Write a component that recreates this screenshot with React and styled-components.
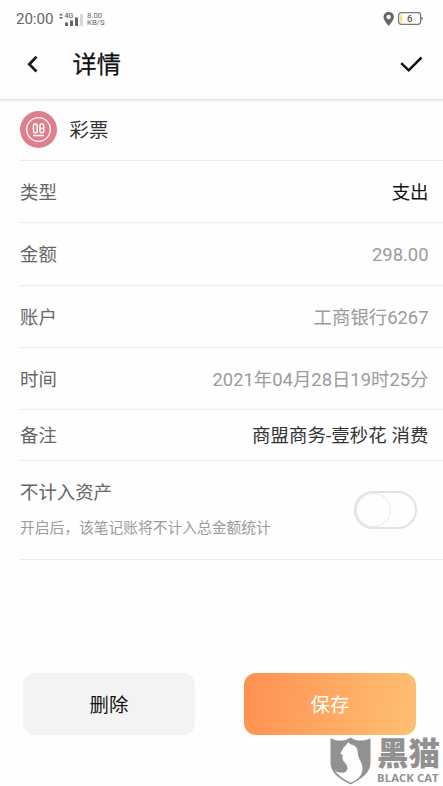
import React from "react";
import styled, { createGlobalStyle } from "styled-components";

const GlobalStyle = createGlobalStyle`
  * {
    box-sizing: border-box;
  }

  body {
    margin: 0;
    background: #fefefe;
    font-family: Roboto, "Noto Sans CJK SC", sans-serif;
  }

  button {
    padding: 0;
    border: none;
    background: none;
    font-family: inherit;
  }
`;

const Base = styled.div`
  position: relative;
  width: 443px;
  height: 786px;
  display: flex;
  flex-direction: column;
  overflow: hidden;
  background: #fefefe;
`;

const StatusBar = styled.div`
  height: 36px;
  padding: 1px 20px 0 16px;
  display: flex;
  align-items: center;
  color: #666;
`;

const Clock = styled.span`
  width: 43px;
  font-size: 15.2px;
  line-height: 18px;
  letter-spacing: -0.1px;
  white-space: nowrap;
`;

const Speed = styled.div`
  margin-left: 3px;
  flex: 1;
  display: flex;
  flex-direction: column;
  font-size: 7.8px;
  line-height: 7px;
`;

const SpeedText = styled.span`
  height: 7px;
`;

const Header = styled.header`
  height: 63.5px;
  padding: 0 20px 6px 26px;
  display: flex;
  align-items: center;
  border-bottom: 1px solid #e3e3e3;
  box-shadow: 0 1px 2px rgba(0, 0, 0, 0.08);
`;

const Title = styled.h1`
  flex: 1;
  margin: 2px 0 0 32.5px;
  font-size: 24.2px;
  line-height: 36px;
  font-weight: 400;
  color: #111;
  -webkit-text-stroke: 0.25px #111;
`;

const IconButton = styled.button`
  display: flex;
`;

const List = styled.div`
  padding-left: 20px;
`;

const Row = styled.div`
  height: ${({ $height }) => $height || 62.25}px;
  padding: ${({ $top = 3 }) => $top}px 14.5px 0 0;
  display: flex;
  align-items: center;
  justify-content: space-between;
  border-bottom: 1px solid #ececec;
`;

const Category = styled.div`
  display: flex;
  align-items: center;
  gap: 12.5px;
  font-size: 19.4px;
  color: #333;
`;

const CategoryName = styled.span`
  margin-top: -3px;
`;

const Label = styled.span`
  font-size: 18.4px;
  line-height: 28px;
  color: #666;
`;

const Value = styled.span`
  font-size: 18.4px;
  line-height: 28px;
  letter-spacing: ${({ $spacing }) => $spacing || 0}px;
  color: ${({ $color }) => $color || "#9b9b9b"};
`;

const Setting = styled.div`
  display: flex;
  flex-direction: column;
  gap: 9px;
`;

const Hint = styled.span`
  font-size: 14.75px;
  line-height: 24px;
  color: #9b9b9b;
`;

const Switch = styled.div`
  width: 63px;
  height: 38px;
  margin: 1px 11.5px 0 0;
  border: 2px solid #e2e2e2;
  border-radius: 19px;
`;

const Knob = styled.div`
  width: 35px;
  height: 34px;
  border: 1px solid #ebebeb;
  border-radius: 50%;
`;

const Actions = styled.div`
  margin-top: 113px;
  padding: 0 27px 0 23px;
  display: flex;
  justify-content: space-between;
`;

const Button = styled.button`
  width: 172px;
  height: 62px;
  padding-bottom: 2px;
  border-radius: 12px;
  font-size: 19.4px;
  color: ${({ $primary }) => ($primary ? "#fff" : "#111")};
  background: ${({ $primary }) =>
    $primary ? "linear-gradient(100deg, #ff9052, #ffc074)" : "#f3f3f3"};
`;

const Watermark = styled.div`
  position: absolute;
  left: 330px;
  top: 737px;
  display: flex;
  gap: 6px;
  color: #929090;
`;

const Brand = styled.div`
  display: flex;
  flex-direction: column;
  white-space: nowrap;
`;

const BrandName = styled.span`
  height: 34px;
  font-size: 31.5px;
  line-height: 36px;
  font-weight: 900;
`;

const BrandLatin = styled.span`
  font-family: "Open Sans", sans-serif;
  font-size: 11.2px;
  line-height: 13px;
  font-weight: 700;
  letter-spacing: 0.15px;
`;

const rows = [
  { label: "类型", value: "支出", color: "#111" },
  { label: "金额", value: "298.00" },
  { label: "账户", value: "工商银行6267" },
  { label: "时间", value: "2021年04月28日19时25分" },
  { label: "备注", value: "商盟商务-壹秒花 消费", color: "#333", height: 50.5, spacing: 0.12 },
];

function Signal() {
  return (
    <svg width="25" height="16" viewBox="0 0 25 16" fill="#666">
      <path d="M0 4.500 2 2.200l2 2.300zM0 6h4L2 8.300z" />
      <text x="5.500" y="6.500" fontSize="7" fontWeight="500">4G</text>
      <path d="M6 11.500h3v3.500H6zM11 9.500h3V15h-3zM16 6.500h3V15h-3z" />
      <path fill="#d8d8d8" d="M21 3h3v12h-3z" />
    </svg>
  );
}

function StatusIcons() {
  return (
    <svg width="40" height="16" viewBox="0 0 40 16">
      <path
        fill="#666"
        fillRule="evenodd"
        d="M5.700.8A5.200 5.200 0 0 0 .5 6c0 3.500 5.200 8.800 5.200 8.800S10.900 9.500 10.900 6A5.200 5.200 0 0 0 5.700.8m0 3a2.200 2.200 0 1 1 0 4.400 2.200 2.200 0 0 1 0-4.400"
      />
      <rect x="15.600" y="1.600" width="22" height="11.800" rx="2.800" fill="none" stroke="#777" strokeWidth="1.200" />
      <path d="M38.300 5.500v4l1.300-1V6.500z" fill="#777" />
      <path d="M17.300 3.600H19v8h-1.700z" fill="#ffe04a" />
      <text x="24" y="11" fontSize="9.500" fontWeight="500" fill="#555">6</text>
    </svg>
  );
}

function LotteryIcon() {
  return (
    <svg width="37" height="37" viewBox="0 0 37 37" fill="none" stroke="#fff">
      <circle cx="18.500" cy="18.500" r="18.500" fill="#e07f8c" stroke="none" />
      <circle cx="18.500" cy="18.500" r="11.800" strokeWidth="1.300" />
      <rect x="13.500" y="13" width="3.700" height="8.700" rx="1.500" strokeWidth="1.500" />
      <rect x="20" y="13" width="3.700" height="8.700" rx="1.500" strokeWidth="1.500" />
      <path d="M20 17.300h3.700M13 24.500h11" strokeWidth="1.300" />
    </svg>
  );
}

function CatShield() {
  return (
    <svg width="41" height="48" viewBox="0 0 41 48">
      <path
        fill="#929090"
        d="M.5 1.200C7 4.600 14.500 4.500 20.500.4c6 4.100 13.500 4.200 20 .8v24.300c0 9.500-7.500 15.500-20 22-12.500-6.500-20-12.500-20-22z"
      />
      <path
        fill="#fefefe"
        d="M18.200 5.300 20.600 7.200C25.500 8 28 11.500 27.800 16c-.1 5 4.700 9 4.700 15.500 0 6.500-4 11-12 14.200C13.500 42.300 8.500 38.700 5 34c6 2.800 11.300 2.200 12.300-1.800.8-3.200-1.500-5.200-3.300-7.400-1.800-2.300-2-4.500-1-7-1.800.3-2.700-.6-2.200-2.200l2.700-4.900 2.200-2.200z"
      />
    </svg>
  );
}

function App() {
  return (
    <>
      <GlobalStyle />
      <Base>
        <StatusBar>
          <Clock>20:00</Clock>
          <Signal />
          <Speed>
            <SpeedText>8.00</SpeedText>
            <SpeedText>KB/S</SpeedText>
          </Speed>
          <StatusIcons />
        </StatusBar>
        <Header>
          <IconButton>
            <svg width="14" height="18" viewBox="0 0 14 18" fill="none" stroke="#17191d" strokeWidth="2.700">
              <path d="M10.500 1.800 3.300 9.300l7.200 7.200" />
            </svg>
          </IconButton>
          <Title>详情</Title>
          <IconButton>
            <svg width="23" height="18" viewBox="0 0 23 18" fill="none" stroke="#111" strokeWidth="2.500">
              <path d="m1.200 8.200 7.500 7.100L21.500 2.500" />
            </svg>
          </IconButton>
        </Header>
        <List>
          <Row $height={61.5} $top={0}>
            <Category>
              <LotteryIcon />
              <CategoryName>彩票</CategoryName>
            </Category>
          </Row>
          {rows.map(({ label, value, color, height, spacing }) => (
            <Row key={label} $height={height}>
              <Label>{label}</Label>
              <Value $color={color} $spacing={spacing}>{value}</Value>
            </Row>
          ))}
          <Row $height={99.5} $top={0}>
            <Setting>
              <Label>不计入资产</Label>
              <Hint>开启后，该笔记账将不计入总金额统计</Hint>
            </Setting>
            <Switch>
              <Knob />
            </Switch>
          </Row>
        </List>
        <Actions>
          <Button>删除</Button>
          <Button $primary>保存</Button>
        </Actions>
        <Watermark>
          <CatShield />
          <Brand>
            <BrandName>黑猫</BrandName>
            <BrandLatin>BLACK CAT</BrandLatin>
          </Brand>
        </Watermark>
      </Base>
    </>
  );
}

export default App;
